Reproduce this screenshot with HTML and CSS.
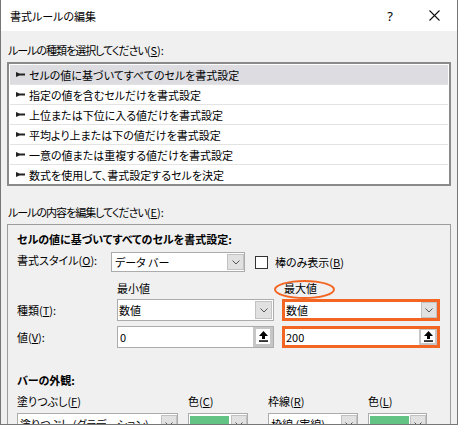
FILE: index.html
```html
<!DOCTYPE html>
<html lang="ja">
<head>
<meta charset="utf-8">
<title>書式ルールの編集</title>
<link rel="stylesheet" href="styles.css">
</head>
<body>
<div class="window">
  <div class="titlebar">
    <span class="title">書式ルールの編集</span>
    <span class="help">?</span>
    <span class="close"><svg width="11" height="11" viewBox="0 0 11 11"><path d="M0.5 0.5 L10.5 10.5 M10.5 0.5 L0.5 10.5" stroke="#111" stroke-width="1.1" fill="none"/></svg></span>
  </div>
  <div class="content">
    <div class="label"><span class="tight">ルールの種類を選択してください</span>(<u>S</u>):</div>
    <div class="listbox">
      <div class="item selected"><svg class="arrow" width="9" height="5" viewBox="0 0 9 5"><polygon points="0,0 3.5,1.6 9,1.6 9,3.4 3.5,3.4 0,5" fill="#222"/></svg><span>セルの値に基づいてすべてのセルを書式設定</span></div>
      <div class="item"><svg class="arrow" width="9" height="5" viewBox="0 0 9 5"><polygon points="0,0 3.5,1.6 9,1.6 9,3.4 3.5,3.4 0,5" fill="#222"/></svg><span>指定の値を含むセルだけを書式設定</span></div>
      <div class="item"><svg class="arrow" width="9" height="5" viewBox="0 0 9 5"><polygon points="0,0 3.5,1.6 9,1.6 9,3.4 3.5,3.4 0,5" fill="#222"/></svg><span>上位または下位に入る値だけを書式設定</span></div>
      <div class="item"><svg class="arrow" width="9" height="5" viewBox="0 0 9 5"><polygon points="0,0 3.5,1.6 9,1.6 9,3.4 3.5,3.4 0,5" fill="#222"/></svg><span>平均より上または下の値だけを書式設定</span></div>
      <div class="item"><svg class="arrow" width="9" height="5" viewBox="0 0 9 5"><polygon points="0,0 3.5,1.6 9,1.6 9,3.4 3.5,3.4 0,5" fill="#222"/></svg><span>一意の値または重複する値だけを書式設定</span></div>
      <div class="item"><svg class="arrow" width="9" height="5" viewBox="0 0 9 5"><polygon points="0,0 3.5,1.6 9,1.6 9,3.4 3.5,3.4 0,5" fill="#222"/></svg><span>数式を使用して、書式設定するセルを決定</span></div>
    </div>
    <div class="label label2"><span class="tight">ルールの内容を編集してください</span>(<u>E</u>):</div>
    <div class="group">
      <div class="heading">セルの値に基づいてすべてのセルを書式設定:</div>
      <div class="style-row">
        <div class="field-label">書式スタイル(<u>O</u>):</div>
        <div class="select style-select"><span class="value">データ バー</span><span class="drop"><svg width="8" height="5" viewBox="0 0 8 5"><polyline points="0.5,0.5 4,4 7.5,0.5" stroke="#555" stroke-width="1" fill="none"/></svg></span></div>
        <span class="checkbox"></span>
        <span class="check-label">棒のみ表示(<u>B</u>)</span>
      </div>
      <div class="grid3 header-row">
        <div></div>
        <div class="col-head">最小値</div>
        <div class="col-head max-head">最大値<span class="ellipse"></span></div>
      </div>
      <div class="grid3 type-row">
        <div class="row-label">種類(<u>T</u>):</div>
        <div class="select box22"><span class="value v-min">数値</span><span class="drop"><svg width="8" height="5" viewBox="0 0 8 5"><polyline points="0.5,0.5 4,4 7.5,0.5" stroke="#555" stroke-width="1" fill="none"/></svg></span></div>
        <div class="select box22 orange"><span class="value v-max">数値</span><span class="drop drop-o"><svg width="8" height="5" viewBox="0 0 8 5"><polyline points="0.5,0.5 4,4 7.5,0.5" stroke="#555" stroke-width="1" fill="none"/></svg></span></div>
      </div>
      <div class="grid3 value-row">
        <div class="row-label">値(<u>V</u>):</div>
        <div class="input box22"><span class="value v-num">0</span><span class="spin"><svg width="9" height="11" viewBox="0 0 9 11"><path d="M4.5 0 L9 5 L6 5 L6 8 L3 8 L3 5 L0 5 Z" fill="#000"/><rect x="0" y="9.3" width="9" height="1.5" fill="#000"/></svg></span></div>
        <div class="input box22 orange"><span class="value v-num-o">200</span><span class="spin spin-o"><svg width="9" height="11" viewBox="0 0 9 11"><path d="M4.5 0 L9 5 L6 5 L6 8 L3 8 L3 5 L0 5 Z" fill="#000"/><rect x="0" y="9.3" width="9" height="1.5" fill="#000"/></svg></span></div>
      </div>
      <div class="heading appearance">バーの外観:</div>
      <div class="bottom-grid">
        <div class="blabel">塗りつぶし(<u>F</u>)</div>
        <div class="blabel">色(<u>C</u>)</div>
        <div class="blabel shift">枠線(<u>R</u>)</div>
        <div class="blabel">色(<u>L</u>)</div>
        <div class="select bbox"><span class="value v-b">塗りつぶし (グラデーション)</span><span class="drop drop-b"><svg width="8" height="5" viewBox="0 0 8 5"><polyline points="0.5,0.5 4,4 7.5,0.5" stroke="#555" stroke-width="1" fill="none"/></svg></span></div>
        <div class="select bbox color"><span class="swatch"></span><span class="drop drop-b"><svg width="8" height="5" viewBox="0 0 8 5"><polyline points="0.5,0.5 4,4 7.5,0.5" stroke="#555" stroke-width="1" fill="none"/></svg></span></div>
        <div class="select bbox shift"><span class="value v-b">枠線 (実線)</span><span class="drop drop-b"><svg width="8" height="5" viewBox="0 0 8 5"><polyline points="0.5,0.5 4,4 7.5,0.5" stroke="#555" stroke-width="1" fill="none"/></svg></span></div>
        <div class="select bbox color"><span class="swatch"></span><span class="drop drop-b"><svg width="8" height="5" viewBox="0 0 8 5"><polyline points="0.5,0.5 4,4 7.5,0.5" stroke="#555" stroke-width="1" fill="none"/></svg></span></div>
      </div>
    </div>
  </div>
</div>
</body>
</html>
```

FILE: styles.css
```css
body {
  margin: 0;
  font-family: "Noto Sans CJK JP", sans-serif;
  font-size: 11px;
  font-feature-settings: "palt";
  color: #000;
  background: #fff;
}

.window {
  width: 458px;
  height: 425px;
  box-sizing: border-box;
  border: 1px solid #767676;
  border-top: none;
  background: #f0f0f0;
  overflow: hidden;
  display: flex;
  flex-direction: column;
}

.titlebar {
  height: 31px;
  flex-shrink: 0;
  background: #fff;
  display: flex;
  align-items: center;
  padding-left: 9px;
}

.title {
  flex: 1;
  line-height: 16px;
}

.help {
  font-family: "Noto Sans", sans-serif;
  font-size: 13px;
  line-height: 16px;
  margin-right: 36px;
}

.close {
  display: flex;
  margin-right: 17px;
}

.content {
  padding: 11px 6px 0 6px;
}

.label {
  line-height: 16px;
  padding-left: 1px;
  white-space: nowrap;
}

.tight {
  letter-spacing: -1px;
}

.label2 {
  margin-top: 18px;
}

.listbox {
  margin-top: 4px;
  border: 2px solid #8a8a8a;
  background: #fff;
  padding: 1px 1px 0 1px;
}

.item {
  height: 19px;
  display: flex;
  align-items: center;
  padding-left: 6px;
  border-top: 1px solid #e3e3e3;
  white-space: nowrap;
  overflow: hidden;
}

.item:first-child {
  border-top: none;
}

.item.selected {
  background: #dcdce1;
}

.arrow {
  flex-shrink: 0;
  margin-right: 4px;
}

.group {
  margin-top: 4px;
  border: 1px solid #9c9c9c;
  padding-left: 9px;
  padding-bottom: 20px;
}

.heading {
  font-weight: bold;
  line-height: 16px;
  padding-top: 6px;
  white-space: nowrap;
}

.style-row {
  display: flex;
  align-items: center;
  margin-top: 5px;
  height: 20px;
}

.field-label {
  width: 94px;
  align-self: flex-start;
  line-height: 17px;
  white-space: nowrap;
}

.select,
.input {
  box-sizing: border-box;
  border: 1px solid #acacac;
  background: #fff;
  display: flex;
  align-items: stretch;
}

.value {
  flex: 1;
  display: flex;
  align-items: center;
  white-space: nowrap;
  overflow: hidden;
}

.drop {
  box-sizing: border-box;
  width: 17px;
  background: #e1e1e1;
  border: 1px solid #c2c2c2;
  display: flex;
  align-items: center;
  justify-content: center;
  flex-shrink: 0;
}

.style-select {
  width: 134px;
  height: 20px;
  padding: 1px 0;
}

.style-select .value {
  padding-left: 3px;
}

.checkbox {
  box-sizing: border-box;
  width: 13px;
  height: 13px;
  border: 1px solid #333;
  background: #fff;
  margin-left: 10px;
}

.check-label {
  margin-left: 7px;
  white-space: nowrap;
}

.grid3 {
  display: grid;
  grid-template-columns: 92px 157px 158px;
  column-gap: 8px;
  align-items: center;
}

.header-row {
  margin-top: 8px;
  line-height: 16px;
}

.max-head {
  position: relative;
  padding-left: 2px;
}

.ellipse {
  position: absolute;
  left: -8px;
  top: 0;
  width: 61px;
  height: 19px;
  box-sizing: border-box;
  border: 2.5px solid #f26522;
  border-radius: 50%;
}

.type-row {
  margin-top: 3px;
}

.value-row {
  margin-top: 5px;
}

.row-label {
  white-space: nowrap;
  line-height: 16px;
}

.box22 {
  height: 22px;
}

.type-row .select {
  padding: 1px 1px 1px 0;
}

.type-row .select.orange {
  padding: 0;
}

.orange {
  border: 3px solid #f26522;
}

.v-min {
  padding-left: 1px;
}

.v-max {
  padding-left: 1px;
}

.drop-o {
  width: 16px;
}

.v-num {
  padding-left: 2px;
}

.v-num-o {
  padding-left: 1px;
}

.spin {
  box-sizing: border-box;
  width: 20px;
  background: #fff;
  border-style: solid;
  border-color: #c6c6c6;
  border-width: 2px 3px 3px 3px;
  display: flex;
  align-items: center;
  justify-content: center;
  flex-shrink: 0;
}

.spin-o {
  width: 18px;
  border-width: 1px 2px 2px 2px;
}

.appearance {
  padding-top: 0;
  margin-top: 24px;
}

.bottom-grid {
  display: grid;
  grid-template-columns: 161px 60px 100px 59px;
  column-gap: 10px;
  row-gap: 4px;
  margin-top: 5px;
}

.blabel {
  line-height: 16px;
  white-space: nowrap;
}

.shift {
  margin-left: 10px;
}

.bbox {
  height: 22px;
  padding: 1px 0;
}

.v-b {
  padding-left: 2px;
}

.drop-b {
  width: 16px;
}

.color {
  padding: 2px 0 1px 1px;
}

.swatch {
  width: 39px;
  background: #63c384;
  margin-right: auto;
}

.color .drop {
  margin-top: -1px;
}
```
